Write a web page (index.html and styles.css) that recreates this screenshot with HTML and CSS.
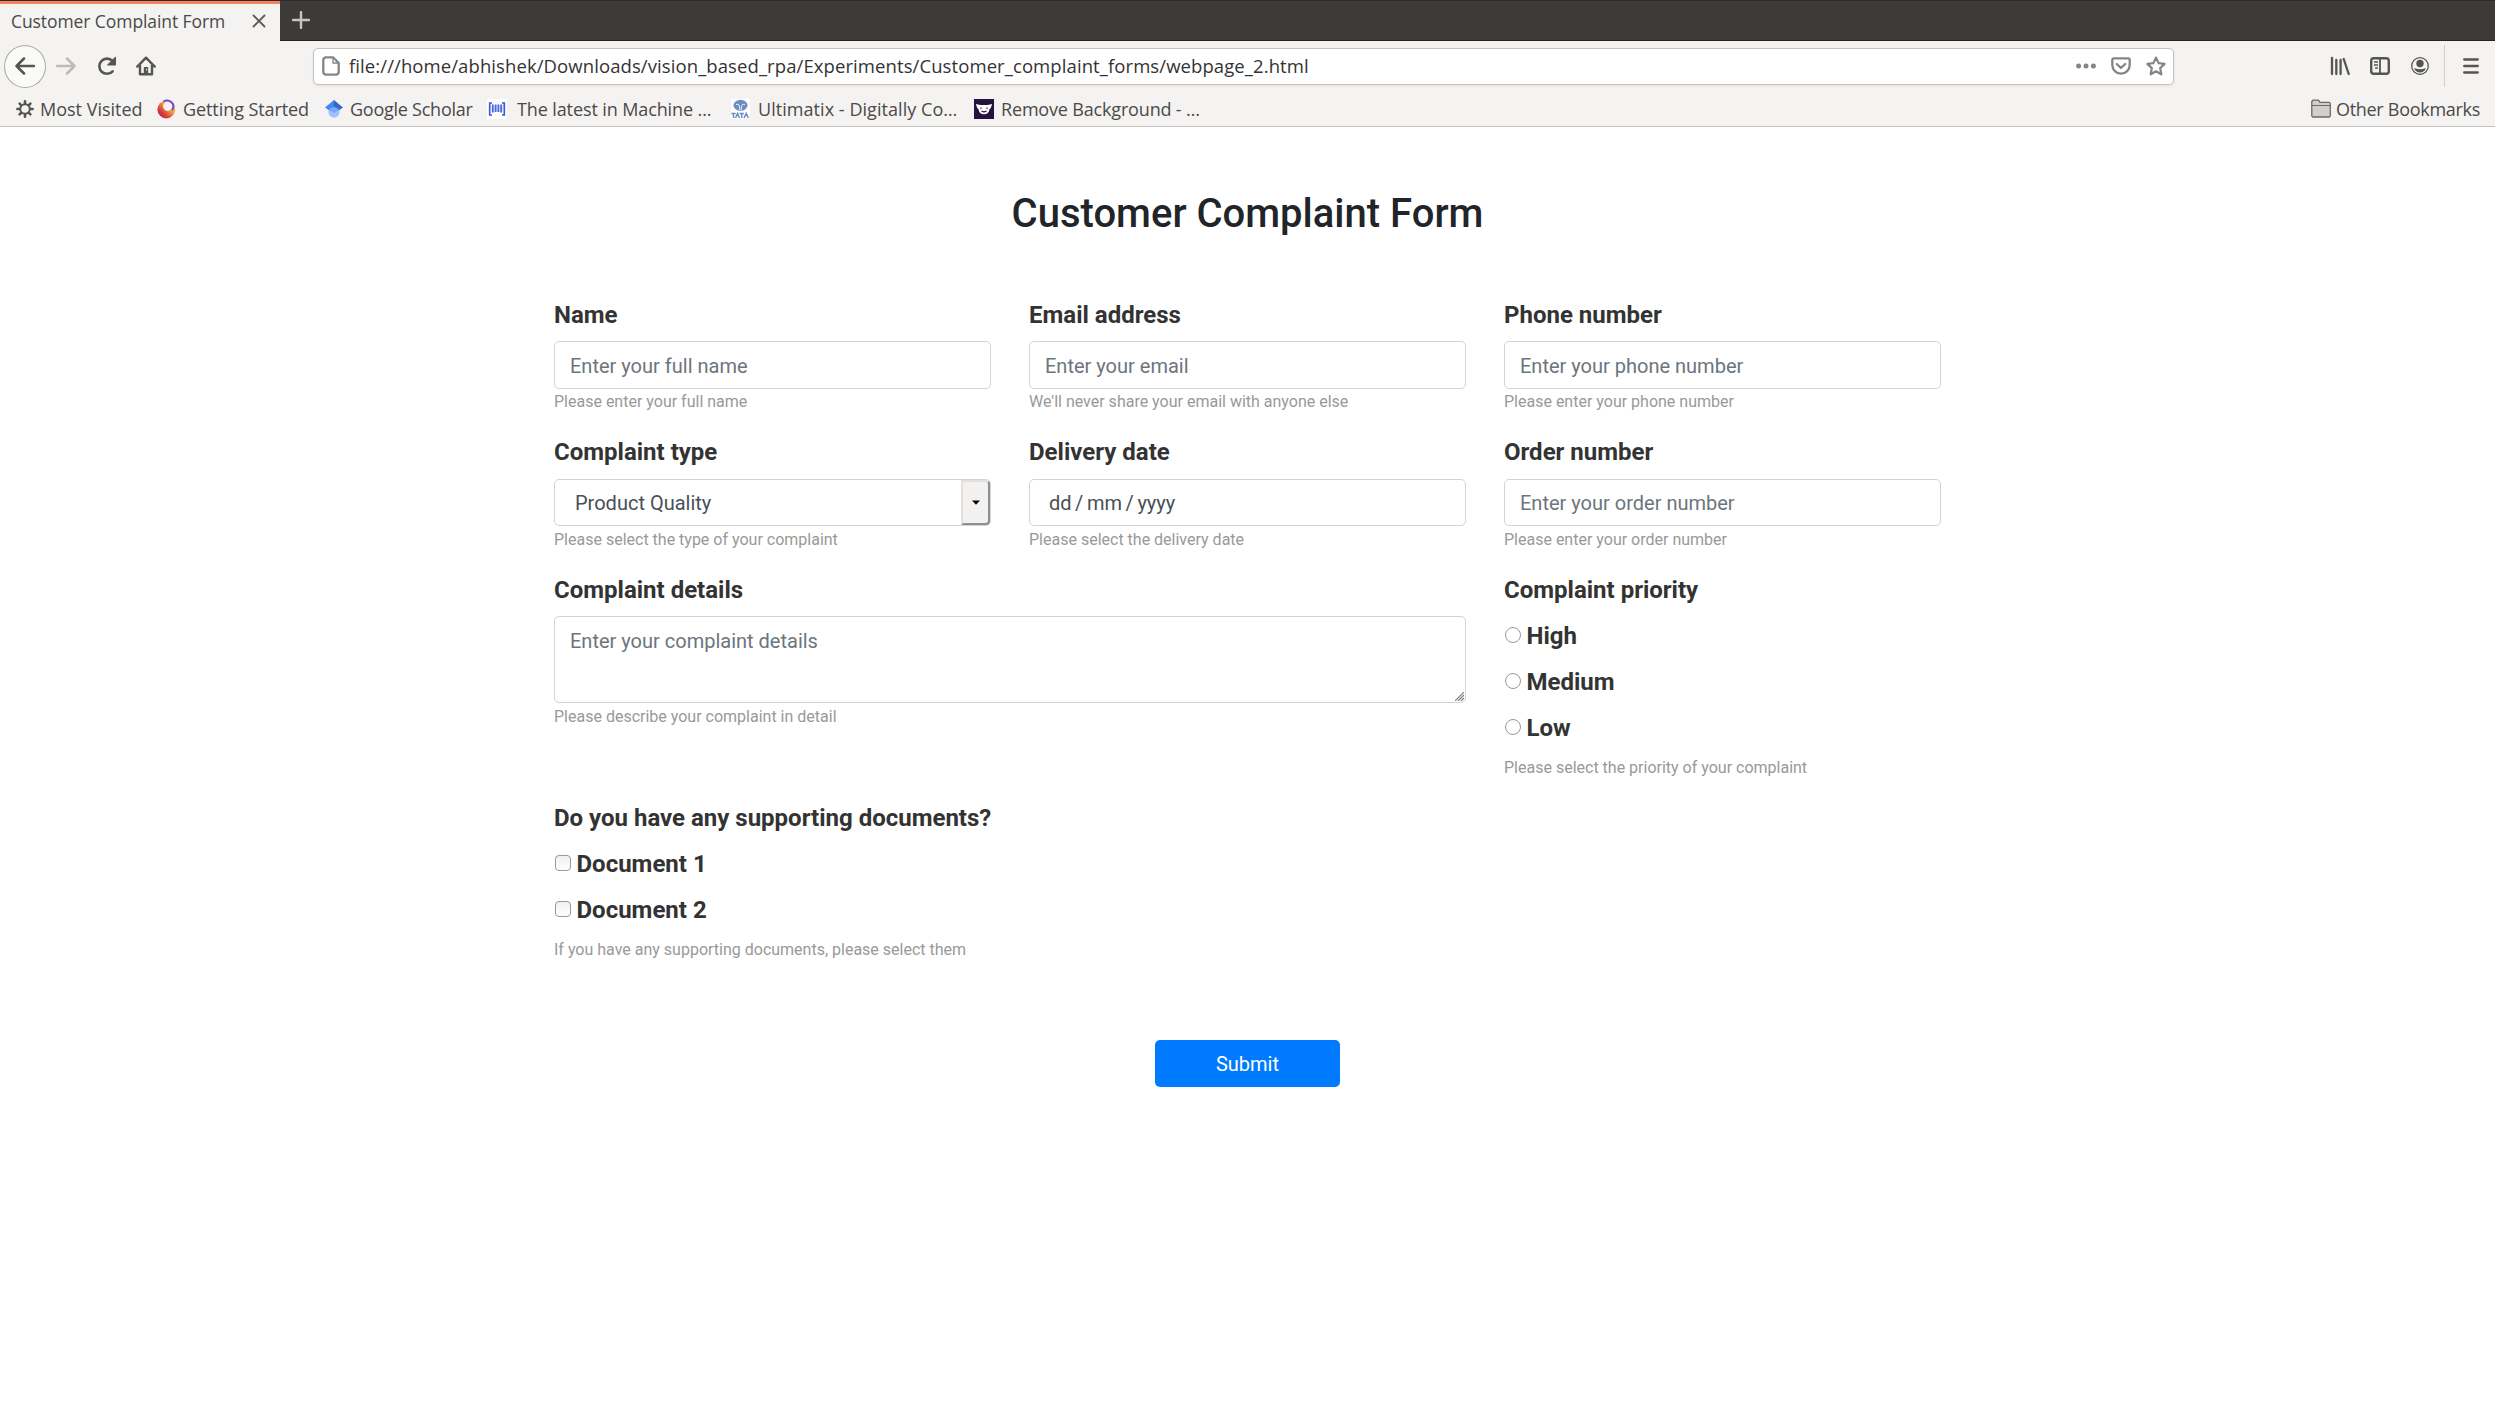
FILE: index.html
```html
<!DOCTYPE html>
<html lang="en">
<head>
<meta charset="utf-8">
<title>Customer Complaint Form</title>
<link rel="stylesheet" href="styles.css">
</head>
<body>
<header class="browser">
  <div class="tabstrip">
    <div class="tab"><span class="tab-title">Customer Complaint Form</span>
      <svg class="tab-close" width="14" height="14" viewBox="0 0 14 14"><path d="M1.5 1.5l11 11M12.500 1.500l-11 11" stroke="#5c5c5a" stroke-width="1.8" stroke-linecap="round"/></svg>
    </div>
    <svg class="tab-new" width="18" height="18" viewBox="0 0 18 18"><path d="M9 1v16M1 9h16" stroke="#c9c5be" stroke-width="2.400" stroke-linecap="round"/></svg>
  </div>
  <div class="toolbar">
    <div class="nav">
      <span class="back"><svg width="20" height="18" viewBox="0 0 20 18"><path d="M19 9H1.500M9 1.500L1.500 9 9 16.500" fill="none" stroke="#555553" stroke-width="2.500" stroke-linecap="round" stroke-linejoin="round"/></svg></span>
      <svg class="forward" width="20" height="18" viewBox="0 0 20 18"><path d="M1 9h17.500M11 1.500L18.500 9 11 16.500" fill="none" stroke="#bcbbb9" stroke-width="2.500" stroke-linecap="round" stroke-linejoin="round"/></svg>
      <svg class="reload" width="20" height="20" viewBox="0 0 20 20"><path d="M15.600 15.300A7.600 7.600 0 1 1 15.500 5" fill="none" stroke="#555553" stroke-width="2.600" stroke-linecap="round"/><path d="M18.500 1v8h-8z" fill="#555553" stroke="#555553" stroke-linejoin="round"/></svg>
      <svg class="home" width="20" height="20" viewBox="0 0 20 20"><path d="M1.300 10.600L10 1.700l8.700 8.900M4 9v9.200h12V9" fill="none" stroke="#555553" stroke-width="2.400" stroke-linecap="round" stroke-linejoin="round"/><path d="M7.800 18.500v-7.500h4.400v7.500z" fill="#555553"/><path d="M10.200 12.800h1v1.600h-1z" fill="#f4f3f2"/></svg>
    </div>
    <div class="urlbar">
      <svg width="18" height="20" viewBox="0 0 18 20"><path d="M4 1.300h7l5.700 5.700V16a2.700 2.700 0 0 1-2.700 2.700H4A2.700 2.700 0 0 1 1.300 16V4A2.700 2.700 0 0 1 4 1.300z" fill="none" stroke="#858585" stroke-width="2.300"/><path d="M11 2v5h5" fill="none" stroke="#858585" stroke-width="1.300"/></svg>
      <span class="url">file:///home/abhishek/Downloads/vision_based_rpa/Experiments/Customer_complaint_forms/webpage_2.html</span>
      <span class="page-actions">
        <svg width="20" height="20" viewBox="0 0 20 20" fill="#858585"><circle cx="2.600" cy="10" r="2.500"/><circle cx="10" cy="10" r="2.500"/><circle cx="17.400" cy="10" r="2.500"/></svg>
        <svg width="20" height="20" viewBox="0 0 20 20" fill="none" stroke="#858585" stroke-width="2.300" stroke-linecap="round" stroke-linejoin="round"><path d="M2.700 2.300h14.600a1.400 1.400 0 0 1 1.400 1.400V9a8.700 8.700 0 0 1-17.400 0V3.700a1.400 1.400 0 0 1 1.400-1.400z"/><path d="M5.800 8L10 12l4.200-4"/></svg>
        <svg width="20" height="20" viewBox="0 0 20 20" fill="none" stroke="#858585" stroke-width="2.200" stroke-linejoin="round"><path d="M10 1.600l2.600 5.500 6 .8-4.400 4.200 1.100 6.200L10 15.300l-5.300 3 1.100-6.200L1.400 7.900l6-.8z"/></svg>
      </span>
    </div>
    <div class="tools">
      <svg width="20" height="20" viewBox="0 0 20 20" fill="none" stroke="#555553" stroke-width="2.300" stroke-linecap="round"><path d="M2 2v16M6.300 4v14M10.600 4v14M13.700 3l5 15"/></svg>
      <svg width="20" height="20" viewBox="0 0 20 20" fill="none" stroke="#555553"><rect x="1.200" y="2.200" width="17.600" height="15.600" rx="2.600" stroke-width="2.400"/><path d="M10 2v16" stroke-width="1.800"/><path d="M4 6h4M4 9h4M5 12h3" stroke-width="1.300"/></svg>
      <svg width="20" height="20" viewBox="0 0 20 20"><circle cx="10" cy="10" r="8.300" fill="none" stroke="#555553" stroke-width="1.300"/><circle cx="10" cy="7.500" r="3.700" fill="#555553"/><path d="M4 12.300c2 .2 2.500.9 6 .9s4-.7 6-.9c-1 2.700-3.200 4.200-6 4.200s-5-1.500-6-4.200z" fill="#555553"/></svg>
      <i class="separator"></i>
      <svg width="16" height="20" viewBox="0 0 16 20"><path d="M1.200 3.500h13.600M1.200 10h13.600M1.200 16.500h13.600" stroke="#555553" stroke-width="2.300" stroke-linecap="round"/></svg>
    </div>
  </div>
  <nav class="bookmarks">
    <a class="bookmark"><svg width="18" height="20" viewBox="-9 -10 18 20"><g stroke="#555553" stroke-width="2.600" stroke-linecap="round"><path d="M0-7.800V7.800M-7.600 0H7.600M-5.400-5.400L5.400 5.400M-5.400 5.400L5.400-5.400"/></g><circle r="4.800" fill="#f4f3f2" stroke="#555553" stroke-width="2"/></svg><span class="b-most">Most Visited</span></a>
    <a class="bookmark"><svg width="19" height="20" viewBox="0 0 19 20"><defs><linearGradient id="fx" x1="1" y1="0" x2="0" y2="1"><stop offset="0" stop-color="#ffd93b"/><stop offset=".4" stop-color="#f2a04a"/><stop offset=".7" stop-color="#d9383f"/><stop offset="1" stop-color="#a4245c"/></linearGradient></defs><circle cx="9.300" cy="10.500" r="8.900" fill="url(#fx)"/><circle cx="10.700" cy="7.300" r="4.600" fill="#f4f3f2"/><path d="M6.500 2.300C12-.5 19.500 4.500 15 11.300" fill="none" stroke="#7542e5" stroke-width="1.900"/></svg><span class="b-start">Getting Started</span></a>
    <a class="bookmark"><svg width="18" height="20" viewBox="0 0 18 20"><circle cx="9" cy="13" r="5.700" fill="#a0c3ff"/><path d="M9 1L0 8.500l4 2.800A5.700 5.700 0 0 1 9 8.400z" fill="#4285f4"/><path d="M9 1l9 7.500-4 2.800A5.700 5.700 0 0 0 9 8.400z" fill="#356ac3"/><path d="M4 11.300a5.700 5.700 0 0 1 10 0L9 14z" fill="#76a7fa"/></svg><span class="b-scholar">Google Scholar</span></a>
    <a class="bookmark"><svg width="20" height="20" viewBox="0 0 20 20"><path fill="#fff" d="M0 0h20v20H0z"/><path d="M5 4H2.700v12H5M15 4h2.300v12H15" fill="none" stroke="#3c5bd6" stroke-width="1.700"/><path d="M5.800 5.500v8M8.600 5.500v7.500M11.400 5.500v7.500M14.200 5.500v8" fill="none" stroke="#4a68dc" stroke-width="1.900"/></svg><span class="b-latest">The latest in Machine …</span></a>
    <a class="bookmark"><svg width="19" height="20" viewBox="0 0 19 20"><path fill="#fff" d="M0 0h19v20H0z"/><ellipse cx="9.500" cy="6.300" rx="7" ry="5.500" fill="#6c8cc4"/><path d="M5 5.500c3-.8 3.700.5 3.700 5.500M14 5.500c-3-.8-3.700.5-3.700 5.500" fill="none" stroke="#fff" stroke-width=".9"/><path d="M.3 14.500h4.400M2.500 14.500V19M4.500 19l2-4.500 2 4.500M8.500 14.500h4.400M10.700 14.500V19M13 19l2.200-4.500 2.200 4.500" fill="none" stroke="#6c8cc4" stroke-width="1.500"/></svg><span class="b-ultimatix">Ultimatix - Digitally Co…</span></a>
    <a class="bookmark"><svg width="20" height="20" viewBox="0 0 20 20"><path fill="#23133d" d="M0 0h20v20H0z"/><path d="M1.800 5l4.600 1h7.200l4.600-1-1.700 4.500-1 .5c-.4 3.700-2.200 5.300-5.500 5.300S4.900 13.700 4.500 10l-1-.5z" fill="#fff"/><path d="M7 8.500v1.400M13 8.500v1.400M7.500 12q2.500 1.800 5 0" fill="none" stroke="#23133d" stroke-width="1.100"/></svg><span class="b-remove">Remove Background - …</span></a>
    <a class="bookmark other"><svg width="20" height="20" viewBox="0 0 20 20"><path d="M.8 17V2.500L2 1.200h5.500L9 3.400h9.300l1 1V17l-1 1H1.800z" fill="#d1cfcd" stroke="#6b6a68" stroke-width="1.300"/><path d="M1 6.500h18" stroke="#6b6a68"/></svg><span class="b-other">Other Bookmarks</span></a>
  </nav>
</header>

<main class="page">
  <h1>Customer Complaint Form</h1>
  <form class="form">
    <div class="field"><label>Name</label><input class="control" type="text" placeholder="Enter your full name"><small>Please enter your full name</small></div>
    <div class="field"><label>Email address</label><input class="control" type="text" placeholder="Enter your email"><small>We'll never share your email with anyone else</small></div>
    <div class="field"><label>Phone number</label><input class="control" type="text" placeholder="Enter your phone number"><small>Please enter your phone number</small></div>
    <div class="field second"><label>Complaint type</label>
      <div class="control select"><span>Product Quality</span><i class="drop"><svg width="8" height="5" viewBox="0 0 8 5"><path d="M0 .5h8L4 4.700z"/></svg></i></div>
      <small>Please select the type of your complaint</small></div>
    <div class="field second"><label>Delivery date</label><div class="control date">dd / mm / yyyy</div><small>Please select the delivery date</small></div>
    <div class="field second"><label>Order number</label><input class="control" type="text" placeholder="Enter your order number"><small>Please enter your order number</small></div>
    <div class="field wide"><label>Complaint details</label>
      <div class="control details">Enter your complaint details<svg class="grip" width="9" height="9" viewBox="0 0 9 9"><path d="M0 9L9 0M3 9l6-6M6 9l3-3" stroke="#777" stroke-width="1.100"/></svg></div>
      <small>Please describe your complaint in detail</small></div>
    <div class="field options"><label>Complaint priority</label>
      <label class="option"><input type="radio" name="priority">High</label>
      <label class="option"><input type="radio" name="priority">Medium</label>
      <label class="option"><input type="radio" name="priority">Low</label>
      <small>Please select the priority of your complaint</small></div>
    <div class="field options full"><label>Do you have any supporting documents?</label>
      <label class="option"><input type="checkbox">Document 1</label>
      <label class="option"><input type="checkbox">Document 2</label>
      <small>If you have any supporting documents, please select them</small></div>
  </form>
  <button class="submit" type="button">Submit</button>
</main>
</body>
</html>
```
FILE: styles.css
```css
* { box-sizing: border-box; }
body { margin: 0; background: #fff; font-family: Roboto, sans-serif; color: #212529; overflow: hidden; }
svg { display: block; flex: none; }

/* Browser window */
.browser { height: 127px; background: #f4f3f2; border-bottom: 1px solid #c4c1be; font: 18px/24px "Open Sans", "Noto Sans", sans-serif; color: #4a4a48; }
.tabstrip { display: flex; align-items: center; height: 41px; background: #3c3b37; border-top: 1px solid #2c2b28; border-bottom: 1px solid #252422; }
.tab { display: flex; align-items: center; width: 280px; height: 41px; margin-bottom: -1px; align-self: flex-start; padding: 0 14px 0 11px; background: #f4f3f2; border-top: 3px solid #f5835f; }
.tab-title { flex: 1; font-size: 17.5px; letter-spacing: -.08px; padding-bottom: 4px; white-space: nowrap; }
.tab-close { margin-bottom: 4px; }
.tab-new { margin: 0 0 1px 12px; }
.toolbar { display: flex; align-items: center; height: 50px; margin-bottom: 1px; }
.nav { display: flex; align-items: center; width: 313px; padding-left: 4px; }
.back { display: flex; align-items: center; justify-content: center; width: 42px; height: 43px; border: 1px solid #aaa8a5; border-radius: 50%; background: #fafaf9; }
.forward { margin-left: 10px; }
.reload { margin-left: 20.5px; }
.home { margin-left: 19.5px; }
.urlbar { display: flex; align-items: center; width: 1861px; height: 37px; padding: 0 7px 0 8px; background: #fff; border: 1px solid #c5c1bd; border-radius: 5px; box-shadow: 0 1px 3px rgba(0, 0, 0, .08); }
.url { flex: 1; margin-left: 9px; font-size: 18.5px; letter-spacing: .09px; color: #333; white-space: nowrap; }
.page-actions { display: flex; gap: 15px; }
.tools { display: flex; align-items: center; gap: 20px; margin-left: auto; padding-right: 16px; }
.separator { width: 1px; height: 42px; margin: 0 -2px 0 -6px; background: #cfccca; }
.bookmarks { display: grid; grid-template-columns: 141px 168px 162px 244px 243px 1fr auto; align-items: center; height: 34px; padding: 0 15px 0 16px; }
.bookmark { display: flex; align-items: center; gap: 7px; white-space: nowrap; }
.bookmark:first-child { gap: 6px; }
.b-start { letter-spacing: -.08px; }
.b-scholar { letter-spacing: -.25px; }
.b-latest { margin-left: 3px; letter-spacing: -.11px; }
.b-ultimatix { margin-left: 1px; letter-spacing: .05px; }
.b-remove { letter-spacing: -.17px; }
.other { gap: 5px; }
.b-other { letter-spacing: -.29px; }

/* Complaint form */
.page { display: flex; flex-direction: column; align-items: center; padding-top: 63px; }
h1 { margin: 0 0 59px; font-size: 40px; font-weight: 500; line-height: 48px; }
.form { display: grid; grid-template-columns: repeat(3, 437px); column-gap: 38px; width: 1387px; grid-template-rows: 137px 138px 228px 240px; }
.field { display: flex; flex-direction: column; }
.wide { grid-column: span 2; }
.full { grid-column: 1 / -1; }
.field label { font-size: 24px; font-weight: 700; line-height: 36px; color: #333; margin-bottom: 8px; }
.second > label { margin-bottom: 9px; }
.options label { margin-bottom: 10px; }
.field small { font-size: 16px; line-height: 24px; color: #999; margin-top: 1px; }
.second small, .wide small { margin-top: 2px; }
.options small { margin-top: 0; }
.control { height: 48px; padding: 8px 15px 7px; border: 1px solid #ced4da; border-radius: 5px; background: #fff; font: 20px/31px Roboto, sans-serif; color: #495057; outline: 0; }
.second .control { height: 47px; padding-top: 7px; }
.control::placeholder { color: #6c757d; opacity: 1; }
.second .select { display: flex; justify-content: space-between; padding: 0 0 0 20px; }
.select span { line-height: 47px; }
.drop { display: flex; align-items: center; justify-content: center; width: 29px; background: #f2f1f0; border: 2px solid; border-color: #e2e1e0 #8f8f91 #8f8f91 #e2e1e0; border-radius: 0 4px 4px 0; }
.second .date { padding: 8px 15px 6px 19px; word-spacing: -1.4px; }
.details { position: relative; height: 87px; padding-top: 9px; color: #6c757d; }
.grip { position: absolute; right: 1px; bottom: 1px; }
.option { display: flex; align-items: center; }
.option input { appearance: none; width: 16px; height: 16px; margin: 0 5.5px 2px 1px; border: 1px solid #999; background: #fff; }
.option input[type="radio"] { border-radius: 50%; }
.option input[type="checkbox"] { border-radius: 4px; background: linear-gradient(#f0f0f0, #fff); }
.submit { width: 185px; height: 47px; padding: 1px 0 0; border: 0; border-radius: 5px; background: #007bff; color: #fff; font: 20px/47px Roboto, sans-serif; }
```
